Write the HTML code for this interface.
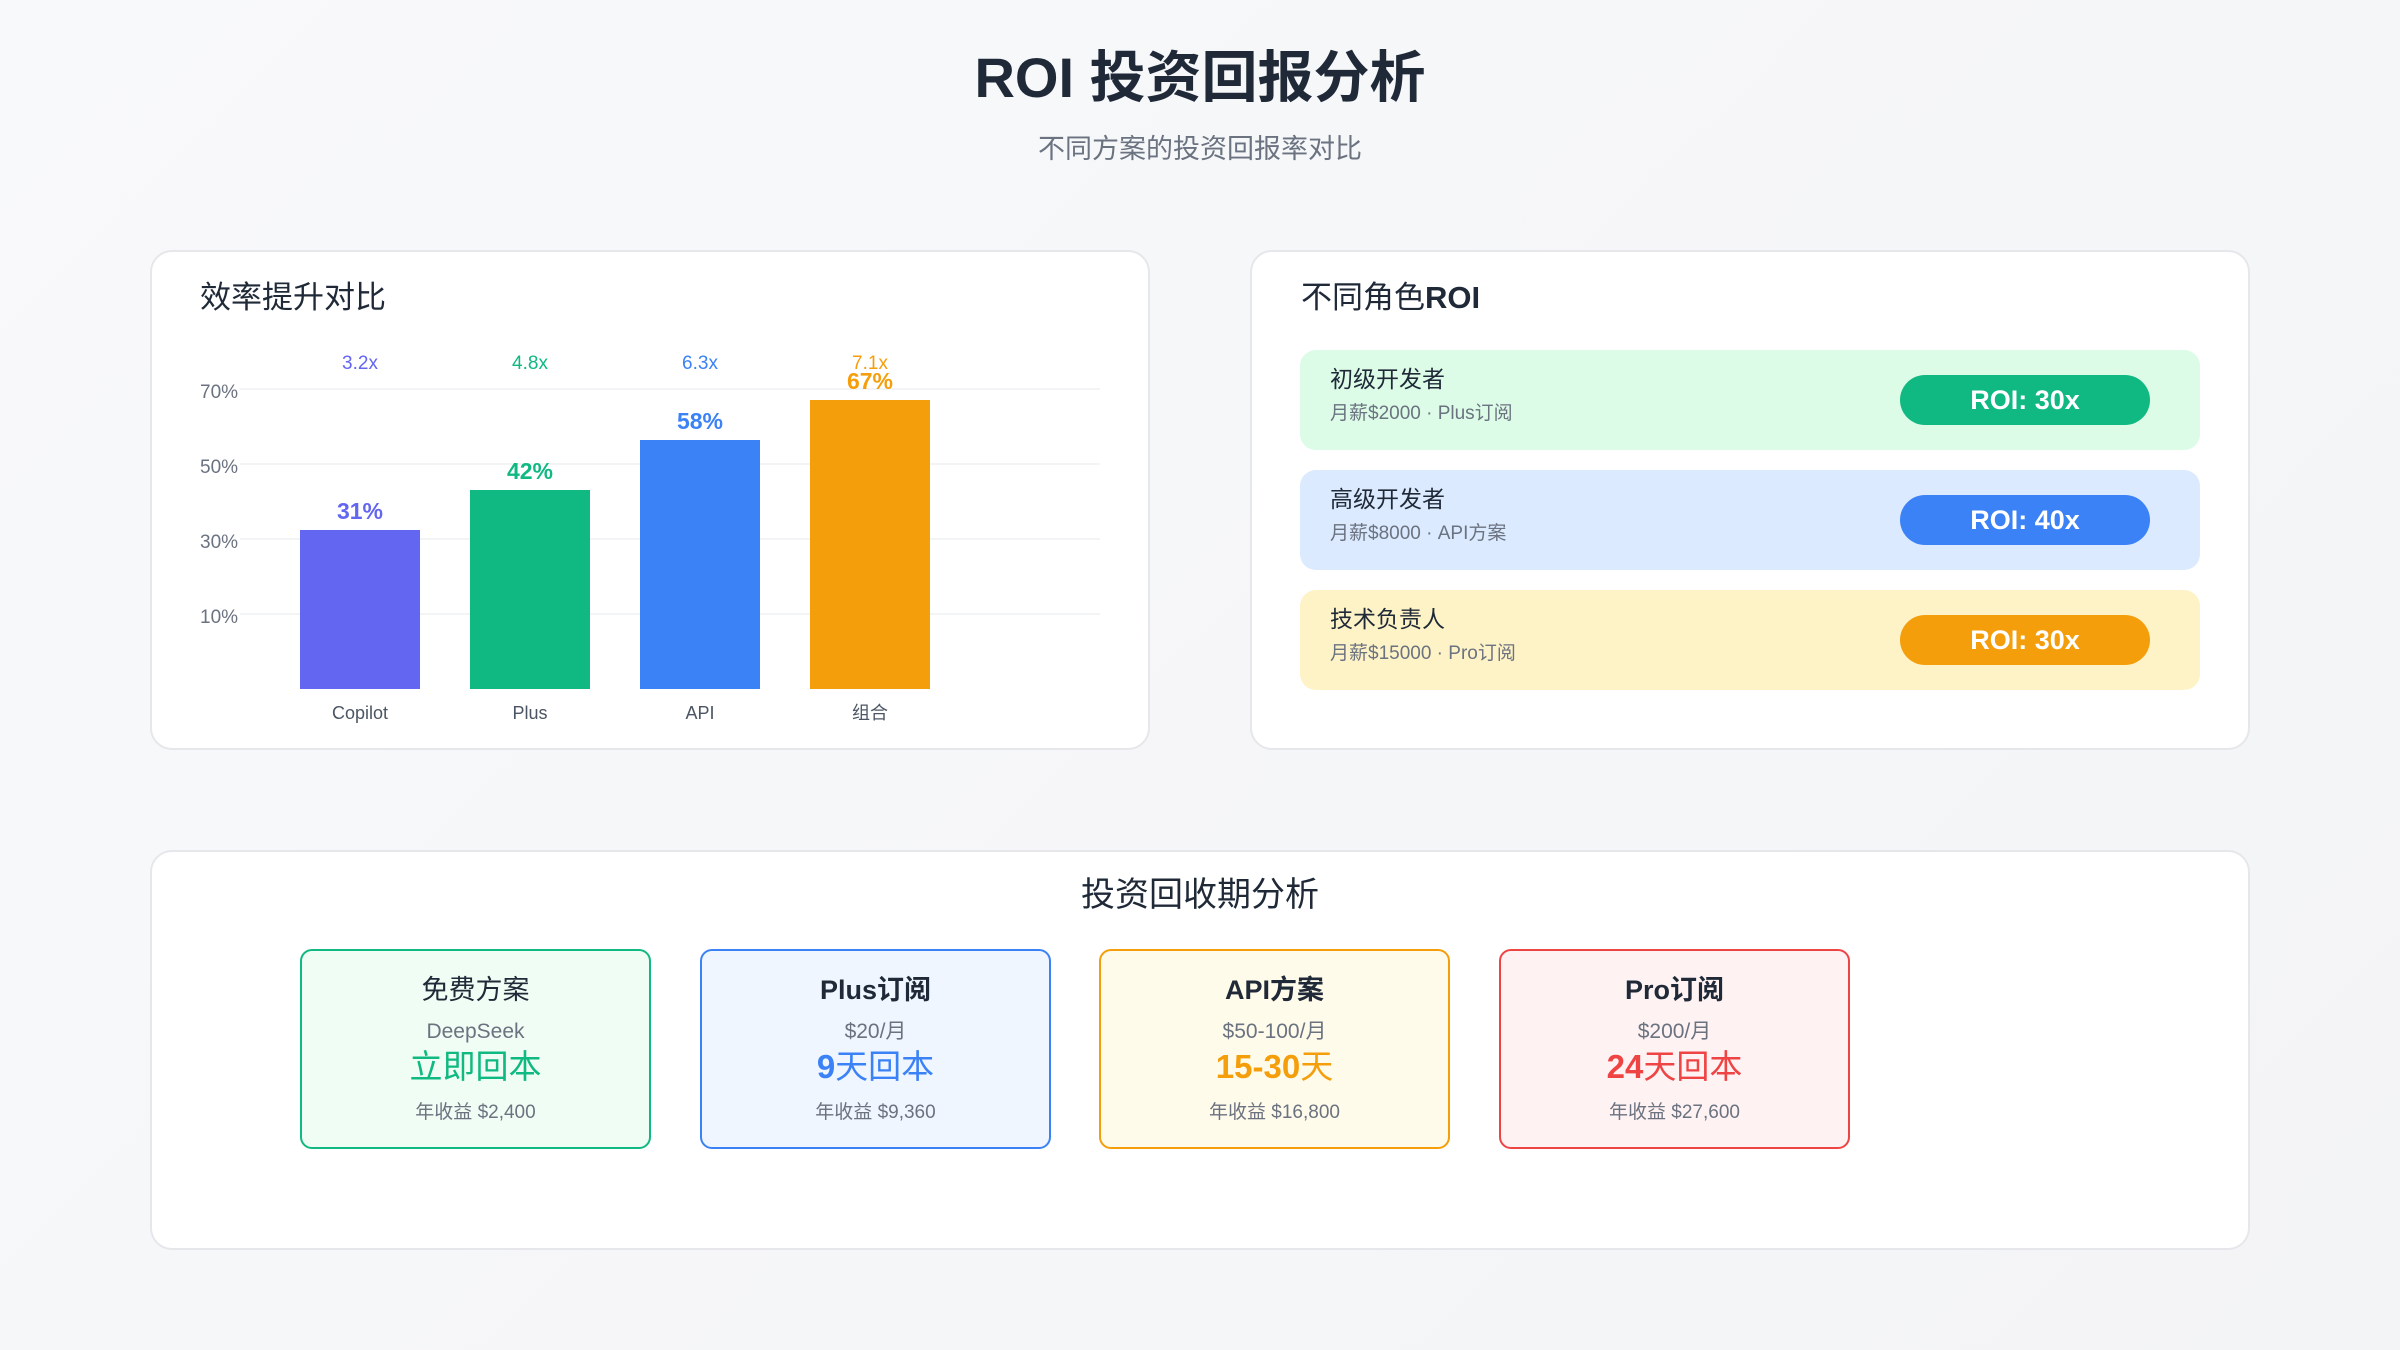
<!DOCTYPE html>
<html><head><meta charset="utf-8"><style>
*{margin:0;padding:0;box-sizing:border-box}
body{width:2400px;height:1350px;background:linear-gradient(135deg,#f8f9fb,#f3f4f6);font-family:"Liberation Sans","Noto Sans CJK SC",sans-serif;color:#1f2937;position:relative;overflow:hidden}
.a{position:absolute}
.card{position:absolute;background:#fff;border:2px solid #e5e7eb;border-radius:22px}
.t{white-space:nowrap;line-height:1}
.grid{position:absolute;left:240px;width:860px;height:2px;background:#f3f4f6}
.yl{position:absolute;left:200px;font-size:19px;color:#6b7280}
.bar{position:absolute;width:120px;bottom:661px}
.cx{position:absolute;width:200px;text-align:center;transform:translateX(-100px)}
.row{position:absolute;left:1300px;width:900px;height:100px;border-radius:16px}
.row .n{position:absolute;left:30px;top:18px;font-size:23px;color:#1f2937}
.row .s{position:absolute;left:30px;top:54px;font-size:19px;color:#6b7280}
.row .p{position:absolute;left:600px;top:25px;width:250px;height:50px;border-radius:25px;color:#fff;font-weight:bold;font-size:27px;text-align:center;line-height:50px}
.box{position:absolute;top:949px;width:351px;height:200px;border:2px solid;border-radius:12px;text-align:center}
.box div{position:absolute;left:0;right:0;white-space:nowrap}
.box .n{top:26px;font-size:27px;font-weight:600;color:#1f2937}
.box .pr{top:70px;font-size:21px;color:#6b7280}
.box .pb{top:99px;font-size:33px}
.box .r{top:152px;font-size:19px;color:#6b7280}
</style></head><body>
<div class="a t" style="left:0;width:2400px;text-align:center;top:50px;font-size:56px;font-weight:bold;color:#1f2937">ROI 投资回报分析</div>
<div class="a t" style="left:0;width:2400px;text-align:center;top:136px;font-size:27px;color:#6b7280">不同方案的投资回报率对比</div>

<div class="card" style="left:150px;top:250px;width:1000px;height:500px"></div>
<div class="a t" style="left:200px;top:282px;font-size:31px;color:#1f2937">效率提升对比</div>
<div class="grid" style="top:388px"></div><div class="grid" style="top:463px"></div><div class="grid" style="top:538px"></div><div class="grid" style="top:613px"></div>
<div class="yl t" style="top:383px">70%</div><div class="yl t" style="top:458px">50%</div><div class="yl t" style="top:533px">30%</div><div class="yl t" style="top:608px">10%</div>
<div class="bar" style="left:300px;top:530px;height:159px;background:#6366f1"></div>
<div class="bar" style="left:470px;top:490px;height:199px;background:#10b981"></div>
<div class="bar" style="left:640px;top:440px;height:249px;background:#3b82f6"></div>
<div class="bar" style="left:810px;top:400px;height:289px;background:#f59e0b"></div>
<div class="cx t" style="left:360px;top:354px;font-size:19px;color:#6366f1">3.2x</div>
<div class="cx t" style="left:530px;top:354px;font-size:19px;color:#10b981">4.8x</div>
<div class="cx t" style="left:700px;top:354px;font-size:19px;color:#3b82f6">6.3x</div>
<div class="cx t" style="left:870px;top:354px;font-size:19px;color:#f59e0b">7.1x</div>
<div class="cx t" style="left:360px;top:500px;font-size:23px;font-weight:bold;color:#6366f1">31%</div>
<div class="cx t" style="left:530px;top:460px;font-size:23px;font-weight:bold;color:#10b981">42%</div>
<div class="cx t" style="left:700px;top:410px;font-size:23px;font-weight:bold;color:#3b82f6">58%</div>
<div class="cx t" style="left:870px;top:370px;font-size:23px;font-weight:bold;color:#f59e0b">67%</div>
<div class="cx t" style="left:360px;top:704px;font-size:18px;color:#4b5563">Copilot</div>
<div class="cx t" style="left:530px;top:704px;font-size:18px;color:#4b5563">Plus</div>
<div class="cx t" style="left:700px;top:704px;font-size:18px;color:#4b5563">API</div>
<div class="cx t" style="left:870px;top:704px;font-size:18px;color:#4b5563">组合</div>

<div class="card" style="left:1250px;top:250px;width:1000px;height:500px"></div>
<div class="a t" style="left:1301px;top:282px;font-size:31px;color:#1f2937">不同角色<b>ROI</b></div>
<div class="row t" style="top:350px;background:#dcfce7"><div class="n">初级开发者</div><div class="s">月薪$2000 · Plus订阅</div><div class="p" style="background:#10b981">ROI: 30x</div></div>
<div class="row t" style="top:470px;background:#dbeafe"><div class="n">高级开发者</div><div class="s">月薪$8000 · API方案</div><div class="p" style="background:#3b82f6">ROI: 40x</div></div>
<div class="row t" style="top:590px;background:#fef3c7"><div class="n">技术负责人</div><div class="s">月薪$15000 · Pro订阅</div><div class="p" style="background:#f59e0b">ROI: 30x</div></div>

<div class="card" style="left:150px;top:850px;width:2100px;height:400px"></div>
<div class="a t" style="left:0;width:2400px;text-align:center;top:878px;font-size:34px;color:#1f2937">投资回收期分析</div>
<div class="box t" style="left:300px;background:#f0fdf4;border-color:#10b981"><div class="n" style="font-weight:normal">免费方案</div><div class="pr">DeepSeek</div><div class="pb" style="color:#10b981">立即回本</div><div class="r">年收益 $2,400</div></div>
<div class="box t" style="left:700px;background:#eff6ff;border-color:#3b82f6"><div class="n">Plus订阅</div><div class="pr">$20/月</div><div class="pb" style="color:#3b82f6"><b>9</b>天回本</div><div class="r">年收益 $9,360</div></div>
<div class="box t" style="left:1099px;background:#fffbeb;border-color:#f59e0b"><div class="n">API方案</div><div class="pr">$50-100/月</div><div class="pb" style="color:#f59e0b"><b>15-30</b>天</div><div class="r">年收益 $16,800</div></div>
<div class="box t" style="left:1499px;background:#fef2f2;border-color:#ef4444"><div class="n">Pro订阅</div><div class="pr">$200/月</div><div class="pb" style="color:#ef4444"><b>24</b>天回本</div><div class="r">年收益 $27,600</div></div>
</body></html>
